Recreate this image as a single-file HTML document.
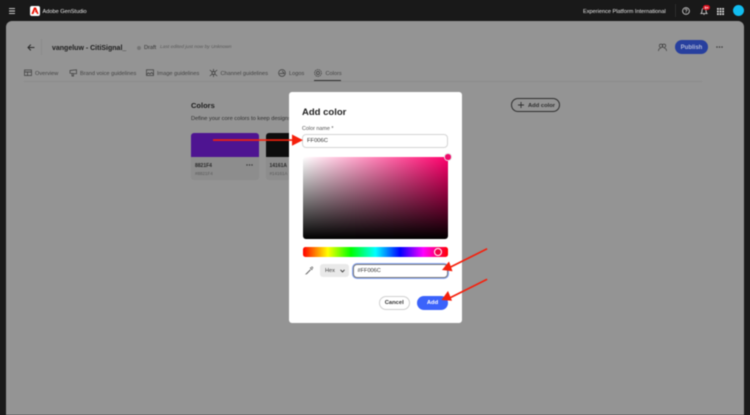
<!DOCTYPE html>
<html lang="en">
<head>
<meta charset="utf-8">
<title>Add color</title>
<style>
html,body{margin:0;padding:0;width:750px;height:415px;overflow:hidden;background:#191919;font-family:"Liberation Sans",sans-serif}
*{box-sizing:border-box}
.a{position:absolute;white-space:nowrap}
#root{position:relative;width:750px;height:415px;overflow:hidden;filter:blur(.45px)}
svg{position:absolute;overflow:visible}
.tab{font-size:5.6px;color:#444;top:71px;line-height:6px}
.ic{fill:none;stroke:#3a3a3a;stroke-width:.7}
</style>
</head>
<body>
<div id="root">
<!-- top bar -->
<svg style="left:9px;top:7.500px" width="6" height="6"><path d="M0 .6h6M0 3h6M0 5.400h6" stroke="#ddd" stroke-width=".9"/></svg>
<div class="a" style="left:29.500px;top:5.500px;width:10.500px;height:10.500px;background:#fff;border-radius:2px"></div>
<svg style="left:31px;top:7px" width="8" height="8"><path d="M3 .5h2l2.600 6.500H6L5.300 5.200H3.800L4.500 3.900 4 2.600 2.400 7H.4z" fill="#eb1000"/></svg>
<div class="a" style="left:42.500px;top:9px;font-size:5.600px;line-height:7px;color:#e8e8e8">Adobe GenStudio</div>
<div class="a" style="left:583px;top:9px;font-size:5.600px;line-height:7px;color:#e8e8e8">Experience Platform International</div>
<div class="a" style="left:675px;top:4px;width:1px;height:13px;background:#2e2e2e"></div>
<svg style="left:682px;top:7px" width="8" height="8"><circle cx="4" cy="4" r="3.400" fill="none" stroke="#ddd" stroke-width=".8"/><path d="M3 3c0-1.400 2-1.400 2 0 0 .8-1 .8-1 1.700M4 5.600v.6" fill="none" stroke="#ddd" stroke-width=".7"/></svg>
<svg style="left:699.500px;top:7px" width="8" height="9"><path d="M1 6.500c1-.8 1-1.500 1-3 0-3 4-3 4 0 0 1.500 0 2.200 1 3zM3.500 7.500h1" fill="none" stroke="#ddd" stroke-width=".8"/></svg>
<div class="a" style="left:703px;top:5px;width:7px;height:5px;background:#e0101e;border-radius:3px"></div>
<div class="a" style="left:704.500px;top:6px;color:#fff;font-size:3.600px;line-height:4px;font-weight:bold">9+</div>
<svg style="left:717px;top:7.500px" width="7" height="7" fill="#ddd"><rect width="1.800" height="1.800"/><rect x="2.600" width="1.800" height="1.800"/><rect x="5.200" width="1.800" height="1.800"/><rect y="2.600" width="1.800" height="1.800"/><rect x="2.600" y="2.600" width="1.800" height="1.800"/><rect x="5.200" y="2.600" width="1.800" height="1.800"/><rect y="5.200" width="1.800" height="1.800"/><rect x="2.600" y="5.200" width="1.800" height="1.800"/><rect x="5.200" y="5.200" width="1.800" height="1.800"/></svg>
<div class="a" style="left:732.500px;top:5px;width:11px;height:11px;border-radius:50%;background:#12bdf0"></div>

<!-- dim page -->
<div class="a" style="left:6px;top:21.300px;width:738px;height:400px;background:#949494;border-radius:6px 6px 0 0"></div>

<svg style="left:26.500px;top:44px" width="8" height="7"><path d="M7.500 3.500H1M3.800 .6 1 3.500l2.800 2.900" fill="none" stroke="#2a2a2a" stroke-width="1"/></svg>
<div class="a" style="left:41px;top:39px;width:1px;height:16px;background:#8c8c8c"></div>
<div class="a" style="left:52px;top:43.500px;font-size:7px;line-height:9px;font-weight:bold;color:#1d1d1d">vangeluw - CitiSignal_</div>
<div class="a" style="left:137px;top:45.500px;width:4px;height:4px;border-radius:50%;background:#767676"></div>
<div class="a" style="left:144px;top:45px;font-size:5.600px;line-height:6px;color:#333">Draft</div>
<div class="a" style="left:160px;top:45px;font-size:4.900px;line-height:6px;font-style:italic;color:#5a5a5a">Last edited just now by Unknown</div>

<svg style="left:658px;top:43px" width="9" height="9"><circle cx="3" cy="2.800" r="1.700" class="ic"/><circle cx="6" cy="2.800" r="1.700" class="ic"/><path d="M.5 8c0-2 1-2.800 2.500-2.800M8.500 8c0-2-1-2.800-2.500-2.800" class="ic"/></svg>
<div class="a" style="left:675px;top:40px;width:33px;height:14px;border-radius:7px;background:#273f9e"></div>
<div class="a" style="left:675px;top:44.500px;width:33px;color:#b0b8d8;font-size:6px;font-weight:bold;line-height:7px;text-align:center">Publish</div>
<svg style="left:716px;top:46px" width="7" height="2" fill="#333"><circle cx="1" cy="1" r=".75"/><circle cx="3.500" cy="1" r=".75"/><circle cx="6" cy="1" r=".75"/></svg>

<!-- tabs -->
<svg style="left:24px;top:69px" width="8" height="8"><rect x=".5" y="1" width="7" height="5.500" class="ic"/><path d="M.5 3h7M3.500 3v3.500" class="ic"/></svg>
<div class="a tab" style="left:35px">Overview</div>
<svg style="left:69px;top:69px" width="9" height="8"><path d="M1 1.500 7.500.8v4L1 4.200zM3 4.500V7h1.500V4.800" class="ic"/></svg>
<div class="a tab" style="left:80px">Brand voice guidelines</div>
<svg style="left:146px;top:69px" width="8" height="8"><rect x=".5" y=".8" width="7" height="5.700" class="ic"/><path d="M.5 5.500 2.500 3.800 4 5l1.500-1.500 2 1.800" class="ic"/></svg>
<div class="a tab" style="left:157px">Image guidelines</div>
<svg style="left:209px;top:69px" width="9" height="9"><circle cx="4.500" cy="4" r="1.500" class="ic"/><path d="M4.500 0v2.500M4.500 5.500V8M.8 1l2.500 2M8.200 1 5.700 3M.8 7l2.500-2M8.200 7 5.700 5" class="ic"/></svg>
<div class="a tab" style="left:220.500px">Channel guidelines</div>
<svg style="left:278px;top:69px" width="8" height="8"><circle cx="4" cy="4" r="3.400" class="ic"/><path d="M1.500 4.500h5M4 2l2.500 2.500" class="ic"/></svg>
<div class="a tab" style="left:289px">Logos</div>
<svg style="left:314px;top:69px" width="8" height="8"><circle cx="4" cy="4" r="3.400" class="ic" stroke-dasharray="1.500 .6"/><circle cx="4" cy="4" r="1.500" class="ic"/></svg>
<div class="a tab" style="left:325.500px">Colors</div>
<div class="a" style="left:24px;top:80.500px;width:678px;height:.8px;background:#8b8b8b"></div>
<div class="a" style="left:314px;top:79.500px;width:27px;height:1.200px;background:#2f2f2f"></div>

<!-- colors section -->
<div class="a" style="left:191px;top:100.500px;font-size:7.500px;line-height:9px;font-weight:bold;color:#1d1d1d">Colors</div>
<div class="a" style="left:191px;top:115.500px;font-size:5.700px;line-height:7px;color:#2f2f2f">Define your core colors to keep designs</div>
<div class="a" style="left:191px;top:133px;width:67.500px;height:47px;border-radius:3px;background:#8d8d8d"></div>
<div class="a" style="left:191px;top:133px;width:67.500px;height:24px;border-radius:3px 3px 0 0;background:#4e1491"></div>
<div class="a" style="left:195px;top:162.500px;font-size:5px;line-height:6px;font-weight:bold;color:#2a2a2a">8821F4</div>
<div class="a" style="left:195px;top:171px;font-size:4.500px;line-height:6px;color:#595959">#8821F4</div>
<svg style="left:246px;top:164px" width="7" height="2" fill="#333"><circle cx="1" cy="1" r=".7"/><circle cx="3.500" cy="1" r=".7"/><circle cx="6" cy="1" r=".7"/></svg>
<div class="a" style="left:266px;top:133px;width:40px;height:47px;border-radius:3px;background:#8d8d8d"></div>
<div class="a" style="left:266px;top:133px;width:40px;height:24px;border-radius:3px 3px 0 0;background:#0d0d0d"></div>
<div class="a" style="left:269.500px;top:162.500px;font-size:5px;line-height:6px;font-weight:bold;color:#2a2a2a">14161A</div>
<div class="a" style="left:269.500px;top:171px;font-size:4.500px;line-height:6px;color:#595959">#14161A</div>

<div class="a" style="left:510.700px;top:98px;width:49px;height:13.500px;border-radius:7px;border:1px solid #2f2f2f"></div>
<svg style="left:518px;top:102px" width="6" height="6"><path d="M3 0v6M0 3h6" stroke="#2f2f2f" stroke-width=".9"/></svg>
<div class="a" style="left:528px;top:102.500px;font-size:5.800px;line-height:7px;font-weight:bold;color:#2f2f2f">Add color</div>

<!-- dialog -->
<div class="a" style="left:288.500px;top:92px;width:173.500px;height:231px;background:#fff;border-radius:3px"></div>
<div class="a" style="left:302px;top:107px;font-size:9.500px;line-height:11px;font-weight:bold;color:#222">Add color</div>
<div class="a" style="left:302px;top:126px;font-size:5.400px;line-height:6px;color:#555">Color name *</div>
<div class="a" style="left:302px;top:133.500px;width:146px;height:14px;border:1px solid #d5d5d5;border-radius:4px;background:#fff"></div>
<div class="a" style="left:307px;top:138px;font-size:5.800px;line-height:7px;color:#333">FF006C</div>

<div class="a" style="left:302.500px;top:156.500px;width:145px;height:82px;border-radius:3px;background:linear-gradient(to bottom,rgba(0,0,0,0),#000),linear-gradient(to right,#fff,#ff006c)"></div>
<div class="a" style="left:444px;top:153px;width:7.500px;height:7.500px;border-radius:50%;background:#ef0a6a;border:1.200px solid #e6e6e6"></div>

<div class="a" style="left:302.500px;top:247px;width:145px;height:10px;border-radius:2.500px;background:linear-gradient(to right,#f00 0%,#ff0 17%,#0f0 33%,#0ff 50%,#00f 67%,#f0f 83%,#f00 100%)"></div>
<div class="a" style="left:433.500px;top:248px;width:8px;height:8px;border-radius:50%;border:1.200px solid #fff;background:#f0054a"></div>

<svg style="left:304.500px;top:266px" width="9" height="9"><path d="M5.500 3.500 1.500 7.500 1 8l.6-.1 4-4M5 1.800l2.200 2.200M5.500 2.300l1-1.200c.7-.6 1.800.4 1.200 1.200L6.600 3.400" fill="none" stroke="#666" stroke-width=".7"/></svg>
<div class="a" style="left:319.500px;top:264px;width:29px;height:13px;border-radius:3px;background:#e9e9e9"></div>
<div class="a" style="left:325px;top:268px;font-size:5.600px;line-height:7px;color:#444">Hex</div>
<svg style="left:339.500px;top:269px" width="5" height="4"><path d="M.5.800 2.500 3 4.500.800" fill="none" stroke="#333" stroke-width=".9"/></svg>
<div class="a" style="left:352.500px;top:263.500px;width:95px;height:14px;border:1px solid #777;border-radius:4px;background:#fff;box-shadow:0 0 0 1px #8aa8f7"></div>
<div class="a" style="left:357.500px;top:268px;font-size:5.600px;line-height:7px;color:#333">#FF006C</div>

<div class="a" style="left:379px;top:296px;width:30.500px;height:13.500px;border-radius:7px;border:1px solid #d0d0d0;background:#fff"></div>
<div class="a" style="left:379px;top:300px;width:30.500px;color:#333;font-size:5.800px;font-weight:bold;line-height:7px;text-align:center">Cancel</div>
<div class="a" style="left:417px;top:296px;width:31px;height:13.500px;border-radius:7px;background:#3b63fb"></div>
<div class="a" style="left:417px;top:300px;width:31px;color:#fff;font-size:5.800px;font-weight:bold;line-height:7px;text-align:center">Add</div>

<!-- arrows -->
<svg style="left:0;top:0" width="750" height="415">
<g fill="#f5200c" stroke="none">
<path d="M213 139.200h80v1.700h-80z"/>
<path d="M292 134.500l11 5.600-11 5.600z"/>
<path d="M486.800 248l.7 1.500-37 18.500-.8-1.500z"/>
<path d="M442 270l7-8.500 3.500 9.700z"/>
<path d="M486.800 278.500l.7 1.500-37 18.500-.8-1.500z"/>
<path d="M441.500 300l6.500-9 4 9.700z"/>
</g>
</svg>
</div>
</body>
</html>
